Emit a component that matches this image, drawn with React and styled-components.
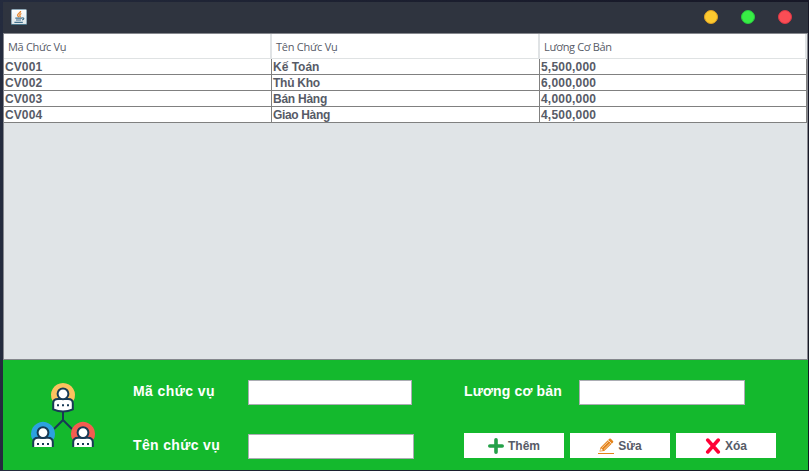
import React from "react";
import styled, { createGlobalStyle } from "styled-components";

const GlobalStyle = createGlobalStyle`
  * { box-sizing: border-box; }
  body { margin: 0; overflow: hidden; background: #1c1f2f; }
`;

const Desktop = styled.div`
  width: 809px;
  height: 471px;
  padding: 2px 1px 1px 3px;
  background: linear-gradient(90deg, #242b3e 0, #1f2435 25%, #191b2b 70%, #171827 100%);
`;

const Window = styled.main`
  width: 805px;
  height: 468px;
  display: flex;
  flex-direction: column;
  color: #575b67;
  font-family: "Liberation Sans", Arial, sans-serif;
`;

const TitleBar = styled.header`
  height: 31px;
  display: flex;
  align-items: center;
  justify-content: space-between;
  padding: 0 16px 1px 8px;
  background: #2f343f;
`;

const WindowControls = styled.div`
  display: flex;
  gap: 23px;
`;

const Control = styled.button`
  width: 14px;
  height: 14px;
  padding: 0;
  border: 1px solid ${(p) => p.$edge};
  border-radius: 50%;
  background: ${(p) => p.$color};
`;

const ScrollPane = styled.section`
  height: 327px;
  border: 1px solid #85878d;
  background: #e0e4e7;
`;

const Table = styled.div`
  width: 803px;
`;

const HeaderRow = styled.div`
  display: grid;
  grid-template: 25px / 268px 268px 267px;
`;

const HeaderCell = styled.div`
  height: 25px;
  padding: 1px 0 0 4px;
  border-right: 2px solid #e0e3e5;
  border-bottom: 1px solid #dfe2e3;
  background: #fff;
  font: 11px/24px "Open Sans", "Noto Sans", sans-serif;
  letter-spacing: ${(p) => p.$spacing}px;
  white-space: nowrap;
`;

const Row = styled.div`
  display: grid;
  grid-template: 16px / 268px 268px 267px;
`;

const Cell = styled.div`
  height: 16px;
  padding-left: 1px;
  border-right: 1px solid #808080;
  border-bottom: 1px solid #808080;
  background: #fff;
  font-size: 12px;
  font-weight: bold;
  line-height: 16px;
  letter-spacing: ${(p) => p.$spacing}px;
  white-space: nowrap;
`;

const Form = styled.section`
  flex: 1;
  display: flex;
  padding-top: 20px;
  background: #14b92d;
`;

const LogoBox = styled.div`
  width: 130px;
  padding: 2px 0 0 27px;
`;

const FieldColumn = styled.div`
  width: ${(p) => p.$width}px;
  display: flex;
  flex-direction: column;
  gap: 29px;
`;

const Field = styled.label`
  display: grid;
  grid-template-columns: 115px auto;
  justify-content: start;
  height: 25px;
`;

const FieldName = styled.span`
  color: #fff;
  font-size: 14px;
  font-weight: bold;
  line-height: 23px;
  letter-spacing: ${(p) => p.$spacing}px;
  white-space: nowrap;
`;

const TextInput = styled.input`
  width: ${(p) => p.$width}px;
  height: 25px;
  padding: 0 4px;
  border: 1px solid #abadb3;
  border-radius: 0;
  background: #fff;
  outline: none;
`;

const Actions = styled.div`
  display: flex;
  gap: 6px;
  margin-top: -1px;
`;

const ActionButton = styled.button`
  width: 100px;
  height: 25px;
  flex: none;
  display: flex;
  align-items: center;
  justify-content: center;
  gap: 4px;
  padding: 0;
  border: 0;
  background: #fff;
  color: #575b67;
  font: bold 12px "Liberation Sans", Arial, sans-serif;
`;

function JavaIcon() {
  return (
    <svg width="16" height="16" viewBox="0 0 16 16">
      <defs>
        <linearGradient id="javaTile" x2="0" y2="1">
          <stop stopColor="#fff" />
          <stop offset="1" stopColor="#dce4e8" />
        </linearGradient>
      </defs>
      <rect x=".5" y=".5" width="15" height="15" rx="1" fill="url(#javaTile)" stroke="#8fa9b8" />
      <path d="M.5 15.5h15" stroke="#477388" />
      <path d="M9.6 2c.2 2-3.4 2.6-3 4.3.2.8 1 1.2 1.3 2M10.4 4.5c-1.6.7-2 1.4-1.4 2.2.4.5.3 1-.1 1.5" fill="none" stroke="#e8862e" strokeWidth="1.3" />
      <path d="M4.3 9.2h6.8M5 11h5M3.4 13.3h8.4M11.2 9c2-.7 2.4 1.5-.2 2" fill="none" stroke="#42718d" strokeWidth="1.2" />
    </svg>
  );
}

function Person({ x, y, color, full }) {
  return (
    <g transform={`translate(${x} ${y})`}>
      <path d="M1.3 17.5A12 12 0 1 1 22.7 17.5Z" fill={color} />
      <path
        d={
          full
            ? "M2.2 26.4V20.3Q2.2 16 7 16H17Q21.8 16 21.8 20.3V26.4Q17 28.6 12 28.6Q7 28.6 2.2 26.4Z"
            : "M2.2 25.2V20.5Q2.2 16 7 16H17Q21.8 16 21.8 20.5V25.2"
        }
        fill="#fff"
        stroke="#183a55"
        strokeWidth="2"
      />
      <circle cx="12" cy="10.8" r="5.4" fill="#fff" stroke="#183a55" strokeWidth="2" />
      <path d="M6 22.3h2M11 22.3h2M16 22.3h2" stroke="#183a55" strokeWidth="2" />
    </g>
  );
}

function TeamLogo() {
  return (
    <svg width="66" height="66" viewBox="0 0 66 66">
      <path d="M33 28v10L24 47M33 38l9 9" fill="none" stroke="#183a55" strokeWidth="2" />
      <Person x={21} y={1} color="#fdc25f" full />
      <Person x={1} y={39.8} color="#2ca2df" />
      <Person x={41} y={39.8} color="#f45d50" />
    </svg>
  );
}

function PlusIcon() {
  return (
    <svg width="16" height="16" viewBox="0 0 16 16">
      <path d="M8 1.8v12.4M1.8 8h12.4" stroke="#24a148" strokeWidth="3.6" strokeLinecap="round" />
    </svg>
  );
}

function PencilIcon() {
  return (
    <svg width="16" height="16" viewBox="0 0 16 16">
      <path d="M1.5 13.5 2.5 9.5 11.3.8Q12 .1 12.8.8L15 3Q15.7 3.7 15 4.5L6.2 13Z" fill="#e4831a" />
      <path d="M4 9.8 10.7 3.2M5.9 11.6l6.8-6.7M2.6 12.5l.5-1.8 1.4 1.3Z" stroke="#fff" strokeWidth=".6" fill="#fff" />
      <path d="M10.2 2.2 13.7 5.7" stroke="#fff" strokeWidth=".7" />
      <path d="M0 15.5h16" stroke="#e4831a" />
    </svg>
  );
}

function DeleteIcon() {
  return (
    <svg width="16" height="16" viewBox="0 0 16 16">
      <path d="M2.7 2 13.3 14M13.3 2 2.7 14" stroke="#ff0035" strokeWidth="3.5" strokeLinecap="round" />
    </svg>
  );
}

const columns = [
  { name: "Mã Chức Vụ", spacing: -0.3 },
  { name: "Tên Chức Vụ", spacing: -0.25 },
  { name: "Lương Cơ Bản", spacing: -0.35 },
];

const code = (text) => ({ text, spacing: 0.1 });
const salary = (text) => ({ text, spacing: 0.2 });

const positions = [
  [code("CV001"), { text: "Kế Toán", spacing: 0 }, salary("5,500,000")],
  [code("CV002"), { text: "Thủ Kho", spacing: -0.25 }, salary("6,000,000")],
  [code("CV003"), { text: "Bán Hàng", spacing: -0.25 }, salary("4,000,000")],
  [code("CV004"), { text: "Giao Hàng", spacing: -0.35 }, salary("4,500,000")],
];

export default function App() {
  return (
    <Desktop>
      <GlobalStyle />
      <Window>
        <TitleBar>
          <JavaIcon />
          <WindowControls>
            <Control $color="#fdc92f" $edge="#dfa023" aria-label="Minimize" />
            <Control $color="#38ee45" $edge="#27c93f" aria-label="Maximize" />
            <Control $color="#fb4d55" $edge="#db3845" aria-label="Close" />
          </WindowControls>
        </TitleBar>
        <ScrollPane>
          <Table>
            <HeaderRow>
              {columns.map((c) => (
                <HeaderCell key={c.name} $spacing={c.spacing}>{c.name}</HeaderCell>
              ))}
            </HeaderRow>
            {positions.map((row) => (
              <Row key={row[0].text}>
                {row.map((cell) => (
                  <Cell key={cell.text} $spacing={cell.spacing}>{cell.text}</Cell>
                ))}
              </Row>
            ))}
          </Table>
        </ScrollPane>
        <Form>
          <LogoBox><TeamLogo /></LogoBox>
          <FieldColumn $width={331}>
            <Field>
              <FieldName $spacing={0.4}>Mã chức vụ</FieldName>
              <TextInput $width={164} />
            </Field>
            <Field>
              <FieldName $spacing={0.35}>Tên chức vụ</FieldName>
              <TextInput $width={166} />
            </Field>
          </FieldColumn>
          <FieldColumn $width={312}>
            <Field>
              <FieldName $spacing={0.15}>Lương cơ bản</FieldName>
              <TextInput $width={166} />
            </Field>
            <Actions>
              <ActionButton><PlusIcon />Thêm</ActionButton>
              <ActionButton><PencilIcon />Sửa</ActionButton>
              <ActionButton><DeleteIcon />Xóa</ActionButton>
            </Actions>
          </FieldColumn>
        </Form>
      </Window>
    </Desktop>
  );
}
